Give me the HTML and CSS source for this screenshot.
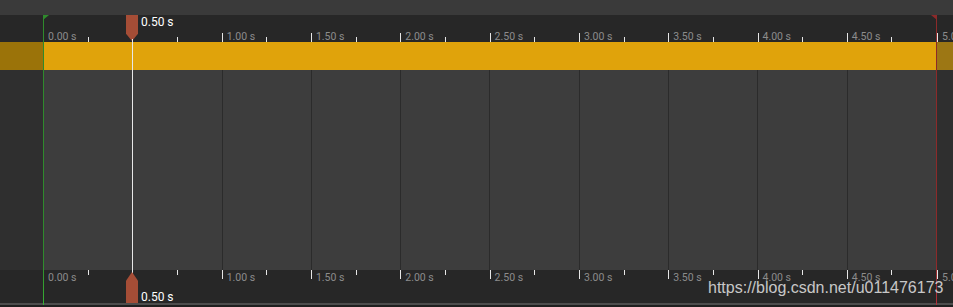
FILE: index.html
```html
<!DOCTYPE html>
<html>
<head>
  <title>Timeline</title>
  <link rel="stylesheet" href="styles.css">
</head>
<body>
  <div class="timeline">
    <div class="topbar"></div>

    <div class="row ruler ruler-top">
      <div class="side"></div>
      <div class="scale">
        <div class="cell major"><span class="tick"></span><span class="label">0.00 s</span></div>
        <div class="cell"><span class="tick"></span></div>
        <div class="cell major"><span class="tick"></span></div>
        <div class="cell"><span class="tick"></span></div>
        <div class="cell major"><span class="tick"></span><span class="label">1.00 s</span></div>
        <div class="cell"><span class="tick"></span></div>
        <div class="cell major"><span class="tick"></span><span class="label">1.50 s</span></div>
        <div class="cell"><span class="tick"></span></div>
        <div class="cell major"><span class="tick"></span><span class="label">2.00 s</span></div>
        <div class="cell"><span class="tick"></span></div>
        <div class="cell major"><span class="tick"></span><span class="label">2.50 s</span></div>
        <div class="cell"><span class="tick"></span></div>
        <div class="cell major"><span class="tick"></span><span class="label">3.00 s</span></div>
        <div class="cell"><span class="tick"></span></div>
        <div class="cell major"><span class="tick"></span><span class="label">3.50 s</span></div>
        <div class="cell"><span class="tick"></span></div>
        <div class="cell major"><span class="tick"></span><span class="label">4.00 s</span></div>
        <div class="cell"><span class="tick"></span></div>
        <div class="cell major"><span class="tick"></span><span class="label">4.50 s</span></div>
        <div class="cell"><span class="tick"></span></div>
      </div>
      <div class="side end">
        <div class="cell major"><span class="tick"></span><span class="label">5.00 s</span></div>
      </div>
    </div>

    <div class="row track">
      <div class="side"></div>
      <div class="bar"></div>
      <div class="side"></div>
    </div>

    <div class="row grid">
      <div class="side"></div>
      <div class="lines">
        <div class="slot"></div><div class="slot"></div><div class="slot"></div><div class="slot"></div><div class="slot"></div>
        <div class="slot"></div><div class="slot"></div><div class="slot"></div><div class="slot"></div><div class="slot"></div>
      </div>
      <div class="side"></div>
    </div>

    <div class="row ruler ruler-bottom">
      <div class="side"></div>
      <div class="scale">
        <div class="cell major"><span class="tick"></span><span class="label">0.00 s</span></div>
        <div class="cell"><span class="tick"></span></div>
        <div class="cell major"><span class="tick"></span></div>
        <div class="cell"><span class="tick"></span></div>
        <div class="cell major"><span class="tick"></span><span class="label">1.00 s</span></div>
        <div class="cell"><span class="tick"></span></div>
        <div class="cell major"><span class="tick"></span><span class="label">1.50 s</span></div>
        <div class="cell"><span class="tick"></span></div>
        <div class="cell major"><span class="tick"></span><span class="label">2.00 s</span></div>
        <div class="cell"><span class="tick"></span></div>
        <div class="cell major"><span class="tick"></span><span class="label">2.50 s</span></div>
        <div class="cell"><span class="tick"></span></div>
        <div class="cell major"><span class="tick"></span><span class="label">3.00 s</span></div>
        <div class="cell"><span class="tick"></span></div>
        <div class="cell major"><span class="tick"></span><span class="label">3.50 s</span></div>
        <div class="cell"><span class="tick"></span></div>
        <div class="cell major"><span class="tick"></span><span class="label">4.00 s</span></div>
        <div class="cell"><span class="tick"></span></div>
        <div class="cell major"><span class="tick"></span><span class="label">4.50 s</span></div>
        <div class="cell"><span class="tick"></span></div>
      </div>
      <div class="side end">
        <div class="cell major"><span class="tick"></span><span class="label">5.00 s</span></div>
      </div>
    </div>

    <div class="divider"></div>
    <div class="footer"></div>

    <!-- overlays -->
    <div class="range-start"></div>
    <div class="range-end"></div>

    <div class="playhead">
      <div class="head head-top"></div>
      <span class="time time-top">0.50 s</span>
      <div class="needle"></div>
      <div class="head head-bottom"></div>
      <span class="time time-bottom">0.50 s</span>
    </div>

    <div class="watermark">https://blog.csdn.net/u011476173</div>
  </div>
</body>
</html>
```

FILE: styles.css
```css
body {
  margin: 0;
  padding: 0;
  background-color: #1f1f1f;
  font-family: Roboto, 'Liberation Sans', sans-serif;
}

.timeline {
  position: relative;
  width: 953px;
  height: 307px;
  overflow: hidden;
  display: flex;
  flex-direction: column;
}

.topbar {
  height: 15px;
  background-color: #3a3a3a;
}

.row {
  display: flex;
}

.row .side {
  width: 43px;
  flex-shrink: 0;
}

.row .side:last-child {
  width: 17px;
}

/* rulers */

.ruler {
  background-color: #272727;
}

.ruler-top {
  height: 27px;
}

.ruler-bottom {
  height: 33px;
}

.scale {
  width: 894px;
  display: flex;
}

.scale .cell {
  flex: 1;
}

.cell {
  display: flex;
  min-width: 0;
  overflow: visible;
  white-space: nowrap;
}

.ruler-top .cell {
  align-items: flex-end;
}

.ruler-bottom .cell {
  align-items: flex-start;
}

.tick {
  width: 1px;
  height: 5px;
  background-color: #e6e6e6;
  flex-shrink: 0;
}

.major .tick {
  height: 9px;
}

.label {
  margin-left: 4px;
  font-size: 10.5px;
  color: #8c8c8c;
  line-height: 12px;
}

.ruler-top .label {
  margin-bottom: -1px;
}

.ruler-bottom .label {
  margin-top: 2px;
}

.side.end {
  overflow: hidden;
  display: flex;
}

.ruler-top .side.end {
  align-items: flex-end;
}

.side.end .cell {
  margin-left: 1px;
}

/* track */

.track {
  height: 28px;
}

.track .side:first-child {
  background-color: #9b7309;
}

.track .side:last-child {
  background-color: #9d7714;
}

.track .bar {
  width: 894px;
  background-color: #e0a30b;
}

/* grid */

.grid {
  height: 200px;
}

.grid .side {
  background-color: #2f2f2f;
}

.lines {
  width: 894px;
  display: flex;
  background-color: #3d3d3d;
}

.slot {
  flex: 1;
  border-left: 1px solid #2b2b2b;
}

.divider {
  height: 2px;
  background-color: #4d4d4d;
}

.footer {
  flex: 1;
  background-color: #1f1f1f;
}

/* overlays */

.range-start,
.range-end {
  position: absolute;
  top: 15px;
  bottom: 2px;
  width: 1px;
}

.range-start {
  left: 43px;
  background: linear-gradient(#2f8a2c 85%, #38b034);
}

.range-start::before {
  content: "";
  position: absolute;
  top: 0;
  left: 0;
  border-top: 5px solid #2f8a2c;
  border-right: 6px solid transparent;
}

.range-end {
  left: 936px;
  background: linear-gradient(#8c2a2a 85%, #b0303a);
}

.range-end::before {
  content: "";
  position: absolute;
  top: 0;
  right: 0;
  border-top: 5px solid #8c2a2a;
  border-left: 6px solid transparent;
}

.playhead {
  position: absolute;
  left: 126px;
  top: 15px;
  width: 12px;
  height: 290px;
}

.head {
  position: absolute;
  left: 0;
  width: 12px;
  height: 26px;
  background-color: #a54d36;
}

.head-top {
  top: 0;
  clip-path: polygon(0 0, 100% 0, 100% 72%, 50% 100%, 0 72%);
}

.head-bottom {
  top: 257px;
  height: 31px;
  clip-path: polygon(50% 0, 100% 28%, 100% 100%, 0 100%, 0 28%);
}

.needle {
  position: absolute;
  left: 6px;
  top: 24px;
  width: 1px;
  height: 235px;
  background-color: #e8e8e8;
}

.time {
  position: absolute;
  left: 15px;
  font-size: 12px;
  color: #ffffff;
  white-space: nowrap;
  line-height: 14px;
}

.time-top {
  top: 0;
}

.time-bottom {
  top: 275px;
}

.watermark {
  position: absolute;
  left: 708px;
  top: 279px;
  font-family: 'Liberation Sans', Arial, sans-serif;
  font-size: 16px;
  color: rgba(230, 230, 230, 0.85);
  white-space: nowrap;
}
```
